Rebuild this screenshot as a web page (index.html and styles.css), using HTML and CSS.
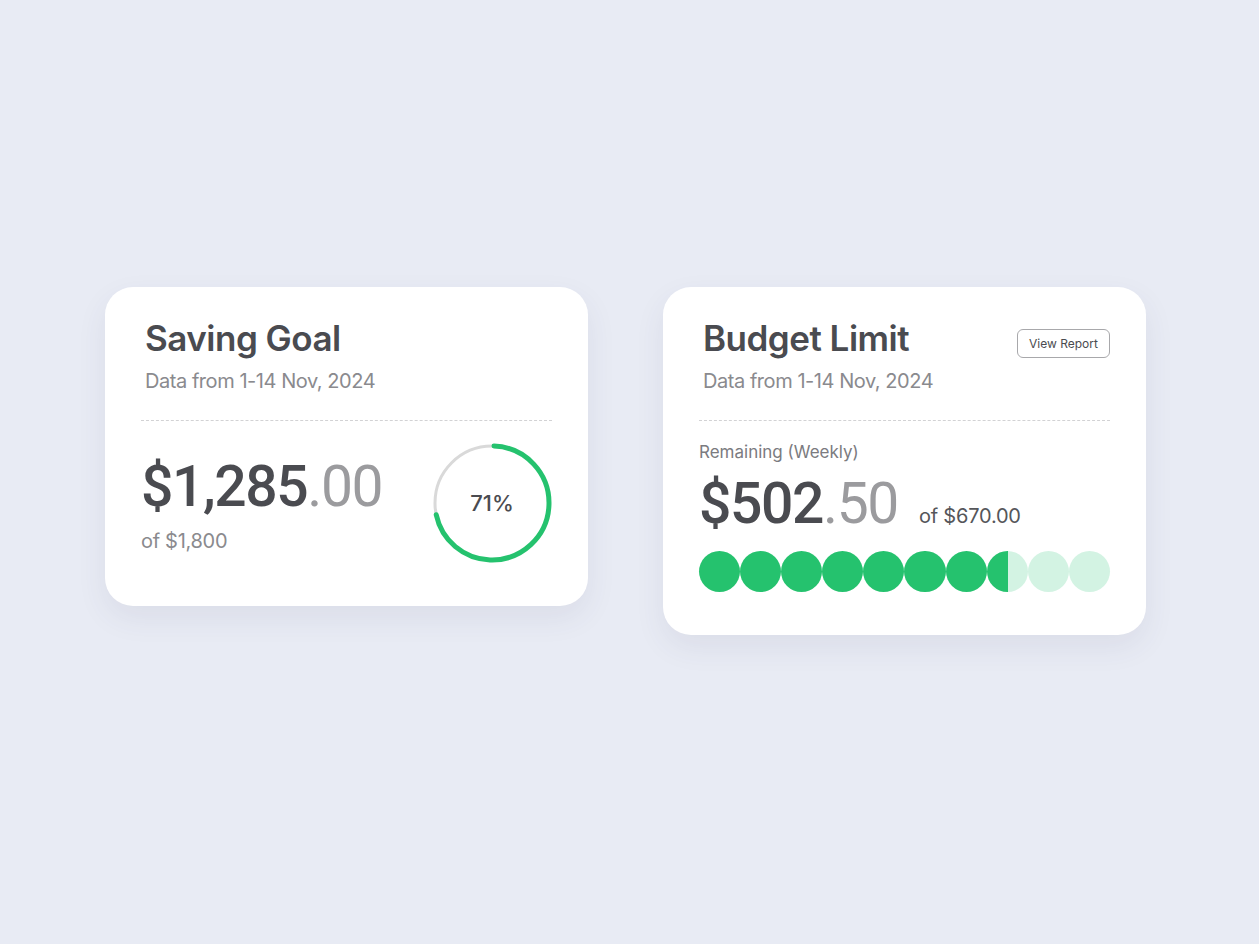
FILE: index.html
```html
<!DOCTYPE html>
<html>
<head>
    <meta charset="utf-8">
    <meta name="viewport" content="width=device-width, initial-scale=1.0">
    <title>Finance Widgets</title>
    <link rel="stylesheet" href="styles.css">
</head>
<body>
    <div class="cards">
        <div class="card">
            <h2 class="card-title">Saving Goal</h2>
            <p class="card-sub">Data from 1-14 Nov, 2024</p>
            <div class="divider"></div>
            <div class="goal-row">
                <div class="goal-amount">
                    <div class="amount">$1,285<span class="cents">.00</span></div>
                    <div class="amount-of">of $1,800</div>
                </div>
                <div class="ring">
                    <svg width="120" height="120" viewBox="0 0 120 120">
                        <circle cx="60" cy="60" r="57" fill="none" stroke="#d9d9d9" stroke-width="3"/>
                        <circle cx="60" cy="60" r="57" fill="none" stroke="#25c26e" stroke-width="5"
                            stroke-linecap="round" stroke-dasharray="254.3 358.1"
                            transform="rotate(-88 60 60)"/>
                    </svg>
                    <span class="ring-label">71%</span>
                </div>
            </div>
        </div>

        <div class="card">
            <div class="card-head">
                <h2 class="card-title">Budget Limit</h2>
                <button class="report-btn">View Report</button>
            </div>
            <p class="card-sub">Data from 1-14 Nov, 2024</p>
            <div class="divider"></div>
            <p class="remaining">Remaining (Weekly)</p>
            <div class="budget-row">
                <span class="amount">$502<span class="cents">.50</span></span>
                <span class="budget-of">of $670.00</span>
            </div>
            <div class="dots">
                <span class="dot"></span>
                <span class="dot"></span>
                <span class="dot"></span>
                <span class="dot"></span>
                <span class="dot"></span>
                <span class="dot"></span>
                <span class="dot"></span>
                <span class="dot half"></span>
                <span class="dot empty"></span>
                <span class="dot empty"></span>
            </div>
        </div>
    </div>
</body>
</html>
```

FILE: styles.css
```css
* {
    box-sizing: border-box;
    margin: 0;
    padding: 0;
}
body {
    font-family: Inter, "Noto Sans", sans-serif;
    background: #e8ebf4;
    color: #4a4b50;
    min-height: 944px;
}
.cards {
    display: flex;
    align-items: flex-start;
    justify-content: center;
    gap: 75px;
    padding-top: 287px;
    padding-right: 8px;
}
.card {
    width: 483px;
    background: #fff;
    border-radius: 28px;
    padding: 30px 36px 43px;
    box-shadow: 0 12px 30px rgba(60, 70, 100, 0.08);
}
.card-head {
    display: flex;
    justify-content: space-between;
    align-items: flex-start;
}
.card-title {
    font-size: 35px;
    font-weight: 600;
    letter-spacing: -0.5px;
    line-height: 42px;
    padding-left: 4px;
    color: #4a4b50;
}
.card-sub {
    font-size: 20px;
    color: #8a8a8e;
    line-height: 24px;
    margin-top: 10px;
    padding-left: 4px;
    letter-spacing: -0.45px;
}
.report-btn {
    margin-top: 12px;
    width: 93px;
    height: 29px;
    border: 1px solid #a8a8ab;
    border-radius: 6px;
    background: #fff;
    font-family: inherit;
    font-size: 12px;
    color: #4a4b50;
}
.divider {
    border-top: 1px dashed #d2d2d4;
    margin: 27px 0 0;
}
.goal-row {
    display: flex;
    justify-content: space-between;
    align-items: center;
    margin-top: 22px;
}
.amount {
    font-family: Roboto, Inter, sans-serif;
    font-size: 57px;
    font-weight: 500;
    letter-spacing: -1.4px;
    line-height: 70px;
    color: #4a4b50;
}
.cents {
    color: #9b9b9e;
    font-weight: 400;
}
.amount-of {
    font-size: 20px;
    color: #8a8a8e;
    line-height: 26px;
    margin-top: 6px;
    letter-spacing: -0.3px;
}
.ring {
    position: relative;
    width: 120px;
    height: 120px;
}
.ring svg {
    display: block;
}
.ring-label {
    position: absolute;
    inset: 0;
    display: flex;
    align-items: center;
    justify-content: center;
    font-size: 22px;
    font-weight: 500;
    color: #4a4b50;
}
.remaining {
    margin-top: 20px;
    font-size: 17px;
    line-height: 22px;
    color: #7b7b80;
}
.budget-row {
    display: flex;
    align-items: baseline;
    gap: 21px;
    margin-top: 6px;
}
.budget-of {
    font-size: 20px;
    color: #55565a;
    letter-spacing: -0.2px;
}
.dots {
    display: grid;
    grid-template-columns: repeat(10, 1fr);
    margin-top: 12px;
}
.dot {
    height: 41px;
    border-radius: 50%;
    background: #25c26e;
}
.dot.half {
    background: linear-gradient(90deg, #25c26e 50%, #d3f3e3 50%);
}
.dot.empty {
    background: #d3f3e3;
}
```
